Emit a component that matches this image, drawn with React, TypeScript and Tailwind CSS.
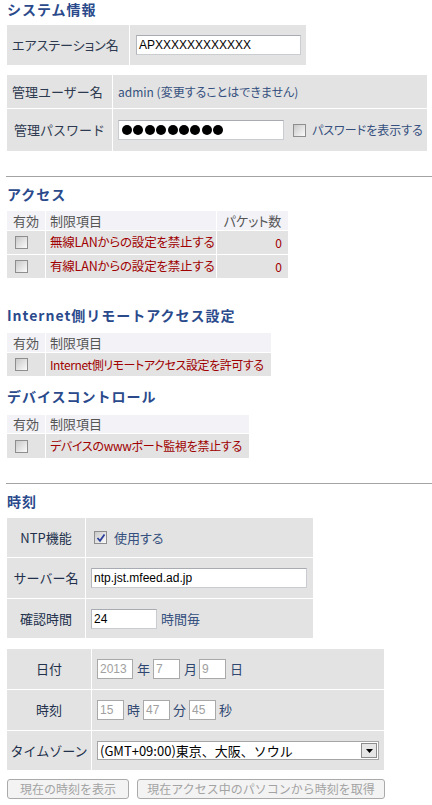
import React from "react";

const JP = "font-['Noto_Sans_CJK_JP',sans-serif]";
const PALT = "[font-feature-settings:'palt']";

function Title({ children, className = "" }: { children: React.ReactNode; className?: string }) {
  return (
    <div className={`h-[16px] leading-[16px] text-[14px] font-bold text-[#2a4a8c] tracking-[1px] ${className}`}>
      {children}
    </div>
  );
}

function Check({ checked = false }: { checked?: boolean }) {
  return (
    <span className="relative inline-block w-[13px] h-[13px] border border-[#8e8e8e] bg-linear-to-br from-[#c9c9c9] to-[#fbfbfb] shrink-0">
      {checked && (
        <svg className="absolute left-[1px] top-[1px]" width="10" height="10" viewBox="0 0 10 10">
          <path d="M1.5 5 L4 7.8 L8.5 1.5" fill="none" stroke="#2a3f9a" strokeWidth="1.8" />
        </svg>
      )}
    </span>
  );
}

function TextBox({ value, w, disabled = false }: { value: string; w: number; disabled?: boolean }) {
  return (
    <div
      style={{ width: w }}
      className={`h-[20px] shrink-0 bg-white border ${
        disabled ? "border-[#a9a9a9] text-[#a0a0a0]" : "border-[#c9ccd0] border-t-[#a8acb2] border-l-[#b4b8bd] text-black"
      } font-['Liberation_Sans',sans-serif] text-[12px] leading-[18px] pl-[2px] overflow-hidden whitespace-nowrap`}
    >
      {value}
    </div>
  );
}

const cell = "bg-[#e3e3e3] flex items-center";
const head = "bg-[#f2f2f7] flex items-center";

export default function App() {
  return (
    <div className={`w-[432px] min-h-[805px] bg-white pl-[7px] ${JP} text-[13px]`}>
      <Title className="mt-[1px]">システム情報</Title>

      {/* Box 1 */}
      <div className="mt-[8px] flex w-[299px] h-[40px] gap-px">
        <div className={`w-[122px] shrink-0 ${cell} pl-[5px] text-[#2e3a50] whitespace-nowrap ${PALT}`}>エアステーション名</div>
        <div className={`flex-1 ${cell} pl-[6px]`}>
          <TextBox value="APXXXXXXXXXXXX" w={165} />
        </div>
      </div>

      {/* Box 2 */}
      <div className="mt-[10px] w-[420px] flex flex-col gap-px">
        <div className="flex h-[33px] gap-px">
          <div className={`w-[105px] shrink-0 ${cell} pl-[5px] text-[#2e3a50] whitespace-nowrap`}>管理ユーザー名</div>
          <div className={`flex-1 ${cell} pl-[5px] text-[#35507e] text-[12px] whitespace-nowrap ${PALT}`}>
            admin (変更することはできません)
          </div>
        </div>
        <div className="flex h-[42px] gap-px">
          <div className={`w-[105px] shrink-0 ${cell} pl-[7px] text-[#2e3a50] whitespace-nowrap`}>管理パスワード</div>
          <div className={`flex-1 ${cell} pl-[5px]`}>
            <div className="w-[166px] shrink-0 h-[20px] bg-white border border-[#c9ccd0] border-t-[#a8acb2] flex items-center gap-[1.4px] pl-[3px]">
              {Array.from({ length: 9 }).map((_, i) => (
                <span key={i} className="inline-block w-[10px] h-[10px] rounded-full bg-black" />
              ))}
            </div>
            <span className="ml-[9px] flex">
              <Check />
            </span>
            <span className={`ml-[6px] text-[#35507e] text-[12px] whitespace-nowrap ${PALT}`}>パスワードを表示する</span>
          </div>
        </div>
      </div>

      <div className="mt-[25px] -ml-[1px] h-px bg-[#a3a3a3]" />

      <Title className="mt-[9px]">アクセス</Title>

      {/* Access table */}
      <div className="mt-[9px] w-[281px] flex flex-col gap-px">
        <div className="flex h-[19px] gap-px text-[#555]">
          <div className={`w-[38px] shrink-0 ${head} justify-center`}>有効</div>
          <div className={`w-[170px] shrink-0 ${head} pl-[4px]`}>制限項目</div>
          <div className={`flex-1 ${head} justify-center whitespace-nowrap ${PALT}`}>パケット数</div>
        </div>
        {["無線LANからの設定を禁止する", "有線LANからの設定を禁止する"].map((t) => (
          <div key={t} className="flex h-[23px] gap-px">
            <div className={`w-[38px] shrink-0 ${cell} pl-[8px]`}>
              <Check />
            </div>
            <div className={`w-[170px] shrink-0 ${cell} pl-[4px] text-[#a00000] text-[12.5px] tracking-[-0.2px] whitespace-nowrap ${PALT}`}>{t}</div>
            <div className={`flex-1 ${cell} justify-end pr-[6px] text-[#a00000] text-[12px]`}>0</div>
          </div>
        ))}
      </div>

      <Title className="mt-[29px]">Internet側リモートアクセス設定</Title>
      <div className="mt-[10px] w-[264px] flex flex-col gap-px">
        <div className="flex h-[19px] gap-px text-[#555]">
          <div className={`w-[38px] shrink-0 ${head} justify-center`}>有効</div>
          <div className={`flex-1 ${head} pl-[4px]`}>制限項目</div>
        </div>
        <div className="flex h-[23px] gap-px">
          <div className={`w-[38px] shrink-0 ${cell} pl-[8px]`}>
            <Check />
          </div>
          <div className={`flex-1 ${cell} pl-[4px] text-[#a00000] text-[12px] tracking-[-0.4px] whitespace-nowrap ${PALT}`}>
            Internet側リモートアクセス設定を許可する
          </div>
        </div>
      </div>

      <Title className="mt-[12px]">デバイスコントロール</Title>
      <div className="mt-[11px] w-[242px] flex flex-col gap-px">
        <div className="flex h-[18px] gap-px text-[#555]">
          <div className={`w-[38px] shrink-0 ${head} justify-center`}>有効</div>
          <div className={`flex-1 ${head} pl-[4px]`}>制限項目</div>
        </div>
        <div className="flex h-[24px] gap-px">
          <div className={`w-[38px] shrink-0 ${cell} pl-[8px]`}>
            <Check />
          </div>
          <div className={`flex-1 ${cell} pl-[4px] text-[#a00000] text-[12px] tracking-[-0.3px] whitespace-nowrap ${PALT}`}>
            デバイスのwwwポート監視を禁止する
          </div>
        </div>
      </div>

      <div className="mt-[25px] -ml-[1px] h-px bg-[#a3a3a3]" />

      <Title className="mt-[9px]">時刻</Title>

      {/* Time table */}
      <div className="mt-[9px] w-[306px] flex flex-col gap-px">
        <div className="flex h-[39px] gap-px">
          <div className={`w-[78px] shrink-0 ${cell} justify-center text-[#22304c]`}>NTP機能</div>
          <div className={`flex-1 ${cell} pl-[8px]`}>
            <Check checked />
            <span className={`ml-[7px] text-[#35507e] ${PALT}`}>使用する</span>
          </div>
        </div>
        <div className="flex h-[40px] gap-px">
          <div className={`w-[78px] shrink-0 ${cell} justify-center text-[#22304c] whitespace-nowrap`}>サーバー名</div>
          <div className={`flex-1 ${cell} pl-[5px]`}>
            <TextBox value="ntp.jst.mfeed.ad.jp" w={216} />
          </div>
        </div>
        <div className="flex h-[39px] gap-px">
          <div className={`w-[78px] shrink-0 ${cell} justify-center text-[#22304c]`}>確認時間</div>
          <div className={`flex-1 ${cell} pl-[5px]`}>
            <TextBox value="24" w={66} />
            <span className="ml-[4px] text-[#35507e]">時間毎</span>
          </div>
        </div>
      </div>

      {/* Date table */}
      <div className="mt-[11px] w-[377px] flex flex-col gap-px">
        <div className="flex h-[40px] gap-px">
          <div className={`w-[84px] shrink-0 ${cell} justify-center text-[#22304c]`}>日付</div>
          <div className={`flex-1 ${cell} pl-[5px] text-[#2e4670]`}>
            <TextBox value="2013" w={36} disabled />
            <span className="ml-[4px] w-[13px]">年</span>
            <span className="ml-[3px]"><TextBox value="7" w={27} disabled /></span>
            <span className="ml-[4px] w-[13px]">月</span>
            <span className="ml-[2px]"><TextBox value="9" w={27} disabled /></span>
            <span className="ml-[4px]">日</span>
          </div>
        </div>
        <div className="flex h-[40px] gap-px">
          <div className={`w-[84px] shrink-0 ${cell} justify-center text-[#22304c]`}>時刻</div>
          <div className={`flex-1 ${cell} pl-[5px] text-[#2e4670]`}>
            <TextBox value="15" w={27} disabled />
            <span className="ml-[3px] w-[13px]">時</span>
            <span className="ml-[3px]"><TextBox value="47" w={27} disabled /></span>
            <span className="ml-[3px] w-[13px]">分</span>
            <span className="ml-[3px]"><TextBox value="45" w={27} disabled /></span>
            <span className="ml-[3px]">秒</span>
          </div>
        </div>
        <div className="flex h-[39px] gap-px">
          <div className={`w-[84px] shrink-0 ${cell} justify-center text-[#22304c] whitespace-nowrap`}>タイムゾーン</div>
          <div className={`flex-1 ${cell} pl-[5px]`}>
            <div className="w-[282px] h-[19px] bg-white border border-[#a5a5a5] flex items-center justify-between pl-[2px] pr-[1px]">
              <span className="text-black text-[13px] leading-[17px] whitespace-nowrap">(GMT+09:00)東京、大阪、ソウル</span>
              <span className="w-[16px] h-[15px] bg-[#e6e6e6] border border-[#8c8c8c] flex items-center justify-center">
                <svg width="7" height="4" viewBox="0 0 7 4">
                  <path d="M0 0 H7 L3.5 4 Z" fill="#000" />
                </svg>
              </span>
            </div>
          </div>
        </div>
      </div>

      <div className="mt-[9px] flex gap-[8px]">
        <button className="w-[122px] h-[20px] border border-[#aaaaaa] rounded-[3px] bg-[#f3f3f3] text-[#a3a3a3] text-[12px] leading-[18px] whitespace-nowrap">
          現在の時刻を表示
        </button>
        <button className="w-[248px] h-[20px] border border-[#aaaaaa] rounded-[3px] bg-[#f3f3f3] text-[#a3a3a3] text-[12px] leading-[18px] whitespace-nowrap">
          現在アクセス中のパソコンから時刻を取得
        </button>
      </div>
    </div>
  );
}
